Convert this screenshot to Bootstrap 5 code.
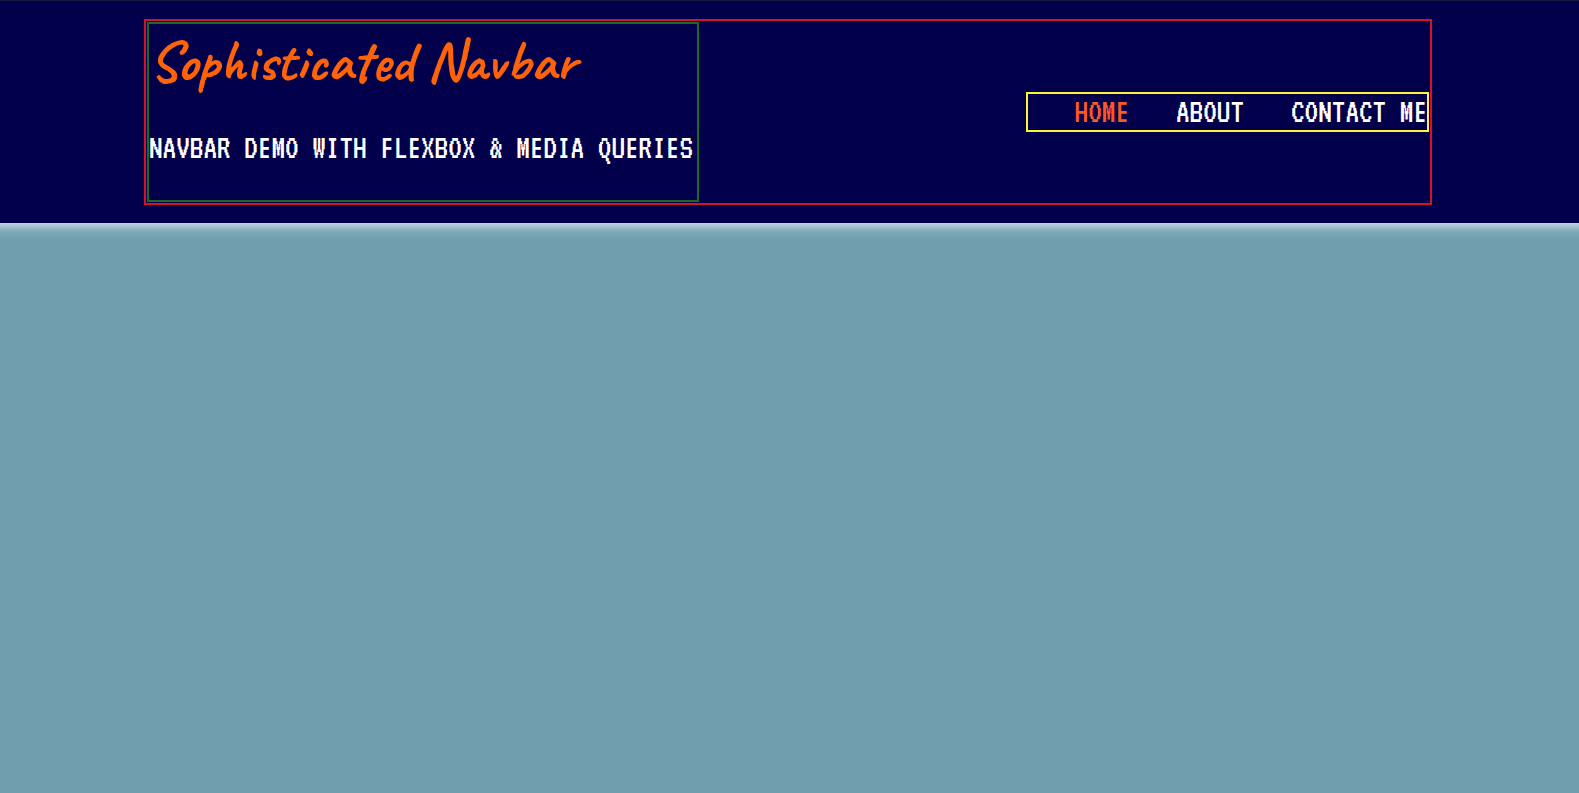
<!DOCTYPE html>
<html lang="en">
<head>
<meta charset="utf-8">
<meta name="viewport" content="width=device-width, initial-scale=1">
<title>Sophisticated Navbar</title>
<link href="https://cdn.jsdelivr.net/npm/bootstrap@5.3.0/dist/css/bootstrap.min.css" rel="stylesheet">
<style>
  body {
    background: #719eae;
    color: #fff;
    font-family: VT323, "Noto Sans Mono CJK SC", "DejaVu Sans Mono", monospace;
    font-size: 34px;
    line-height: 36px;
  }
  .site-header {
    background: #03004b;
    border-top: 1px solid #14173f;
    padding: 18px 147px 18px 144px;
  }
  .header-frame { border: 2px solid #d21428; padding: 1px; }
  .brand-box { border: 2px solid #1c6a28; padding-bottom: 34px; }
  .brand-name {
    color: #ff6309;
    font-family: Caveat, "Caveat Brush", Lato, sans-serif;
    font-size: 57px;
    font-weight: 700;
    line-height: 74px;
  }
  .tagline { margin-top: 32px; padding-right: 4px; white-space: nowrap; }
  .menu-box { border: 2px solid #fbf631; padding-left: 47px; gap: 47px; }
  .menu-box a { color: #fff; text-decoration: none; }
  .menu-box a.active { color: #ff5722; }
  .header-glow {
    height: 16px;
    background: linear-gradient(#c3d4e2, #a5c0cd 25%, #82abb9 50%, #719eae);
  }
</style>
</head>
<body>
<header class="site-header">
  <div class="header-frame d-flex flex-wrap justify-content-between align-items-center">
    <div class="brand-box">
      <h1 class="brand-name mb-0">Sophisticated Navbar</h1>
      <p class="tagline mb-0">NAVBAR DEMO WITH FLEXBOX &amp; MEDIA QUERIES</p>
    </div>
    <nav aria-label="Main">
      <ul class="menu-box list-unstyled d-flex flex-wrap mb-0">
        <li><a class="active" aria-current="page" href="#home">HOME</a></li>
        <li><a href="#about">ABOUT</a></li>
        <li><a href="#contact">CONTACT ME</a></li>
      </ul>
    </nav>
  </div>
</header>
<div class="header-glow"></div>
<script src="https://cdn.jsdelivr.net/npm/bootstrap@5.3.0/dist/js/bootstrap.bundle.min.js"></script>
</body>
</html>
